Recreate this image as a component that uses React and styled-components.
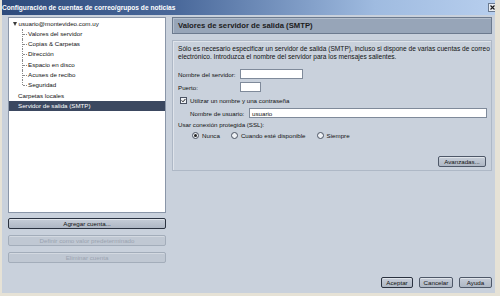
import React from "react";
import styled, { createGlobalStyle, css } from "styled-components";

const Global = createGlobalStyle`
  html, body { margin: 0; padding: 0; background: #c9d1dc; }
  body { font-family: "Liberation Sans", Arial, sans-serif; font-size: 6.2px; color: #111111; }
  * { box-sizing: border-box; }
`;

const Window = styled.div`
  width: 500px;
  height: 296px;
  display: flex;
  flex-direction: column;
  background: #c9d1dc;
  border-left: 2px solid #e6e2d6;
  border-right: 5px solid #e6e2d6;
  border-bottom: 3px solid #e6e2d6;
  overflow: hidden;
`;

const TitleBar = styled.div`
  height: 15px;
  flex: none;
  display: flex;
  align-items: center;
  justify-content: space-between;
  padding: 0 2px 0 2px;
  margin-left: -2px;
  margin-right: -5px;
  background: linear-gradient(90deg, #2e4b7c 0%, #49689a 35%, #9fbbe0 75%, #b8cfee 100%);
`;

const Title = styled.span`
  color: #ffffff;
  font-weight: bold;
  font-size: 6.6px;
`;

const CloseBtn = styled.span`
  width: 9px;
  height: 9px;
  border: 1px solid #6a7a90;
  background: #e8ecf2;
  display: flex;
  align-items: center;
  justify-content: center;
  margin-right: 1px;
`;

const Body = styled.div`
  flex: 1;
  display: flex;
  padding: 2px 1px 0 6px;
  gap: 6px;
`;

const LeftCol = styled.div`
  width: 158px;
  display: flex;
  flex-direction: column;
`;

const TreeBox = styled.div`
  height: 196px;
  background: #ffffff;
  border: 1px solid #8a96a8;
  padding-top: 0.5px;
`;

const Row = styled.div`
  height: 10.3px;
  line-height: 10.3px;
  white-space: nowrap;
  position: relative;
  padding-left: ${(p) => p.$indent}px;
  ${(p) =>
    p.$selected &&
    css`
      background: #3b4860;
      color: #ffffff;
    `}
`;

const Branch = styled.span`
  position: absolute;
  left: 13px;
  top: 0;
  width: 4px;
  height: ${(p) => (p.$last ? "5px" : "10.3px")};
  border-left: 1px dotted #8a8a8a;
  &::after {
    content: "";
    position: absolute;
    left: 0;
    top: 5px;
    width: 4px;
    border-top: 1px dotted #8a8a8a;
  }
`;

const Caret = styled.span`
  display: inline-block;
  width: 0;
  height: 0;
  border-left: 2.5px solid transparent;
  border-right: 2.5px solid transparent;
  border-top: 4px solid #3a3a3a;
  margin-right: 1.5px;
  vertical-align: 0px;
`;

const ButtonStack = styled.div`
  display: flex;
  flex-direction: column;
  gap: 6px;
  margin-top: 5px;
`;

const Button = styled.button`
  font-family: "Liberation Sans", Arial, sans-serif;
  font-size: 6.2px;
  height: ${(p) => p.$h || 11}px;
  width: ${(p) => (p.$w ? p.$w + "px" : "100%")};
  padding: 0;
  border-radius: 2px;
  color: ${(p) => (p.disabled ? "#9ba4b1" : "#111111")};
  border: 1px solid ${(p) => (p.disabled ? "#a3adba" : p.$strong ? "#2a3240" : "#4e5868")};
  background: ${(p) => (p.disabled ? "#c0c8d3" : "linear-gradient(#c6cdd8, #aeb7c4)")};
  box-shadow: ${(p) => (p.disabled ? "inset 0 1px 0 #d3d9e1" : "inset 0 1px 0 #dfe4ea")};
  cursor: default;
`;

const RightCol = styled.div`
  width: 320px;
  display: flex;
  flex-direction: column;
  gap: 6px;
`;

const Header = styled.div`
  height: 17px;
  display: flex;
  align-items: center;
  padding-left: 5px;
  background: #97a5b8;
  border: 1px solid #6c7a8e;
  box-shadow: inset 1px 1px 0 #b4bfcd;
  font-weight: bold;
  font-size: 7.7px;
  color: #1c1c1c;
`;

const Group = styled.div`
  height: 131px;
  border: 1px solid #aeb8c6;
  box-shadow: inset 1px 1px 0 #dfe4eb;
  background: #c9d1dc;
  padding: 4px 4px 0 5px;
  display: flex;
  flex-direction: column;
`;

const Para = styled.p`
  margin: 0;
  line-height: 8px;
  font-size: 6.6px;
  white-space: nowrap;
`;

const FieldRow = styled.div`
  display: flex;
  align-items: center;
  height: ${(p) => p.$h || 10}px;
  margin-top: ${(p) => p.$mt || 0}px;
  padding-left: ${(p) => p.$pl || 0}px;
  gap: ${(p) => p.$gap || 0}px;
`;

const Label = styled.span`
  width: ${(p) => (p.$w ? p.$w + "px" : "auto")};
  flex: none;
  white-space: nowrap;
`;

const Input = styled.div`
  height: ${(p) => p.$h || 10}px;
  width: ${(p) => (p.$w ? p.$w + "px" : "auto")};
  flex: ${(p) => (p.$w ? "none" : 1)};
  background: #ffffff;
  border: 1px solid #7f8a9a;
  display: flex;
  align-items: center;
  padding-left: 2px;
`;

const Check = styled.span`
  width: 7px;
  height: 7px;
  border: 1px solid #4a5262;
  background: #eef1f5;
  display: flex;
  align-items: center;
  justify-content: center;
  flex: none;
`;

const Radio = styled.span`
  width: 7px;
  height: 7px;
  border-radius: 50%;
  border: 1px solid #4a5262;
  background: #eef1f5;
  display: flex;
  align-items: center;
  justify-content: center;
  flex: none;
  &::after {
    content: "";
    width: 3px;
    height: 3px;
    border-radius: 50%;
    background: ${(p) => (p.$on ? "#222" : "transparent")};
  }
`;

const RadioItem = styled.span`
  display: flex;
  align-items: center;
  gap: 3px;
  margin-right: ${(p) => p.$mr || 0}px;
`;

const GroupFooter = styled.div`
  display: flex;
  justify-content: flex-end;
  margin-top: 16px;
  padding-right: 1px;
`;

const Footer = styled.div`
  display: flex;
  justify-content: flex-end;
  gap: 6px;
  padding: 0 3px 5px 0;
`;

const tree = [
  { t: "usuario@montevideo.com.uy", indent: 4, caret: true },
  { t: "Valores del servidor", indent: 19, branch: true },
  { t: "Copias & Carpetas", indent: 19, branch: true },
  { t: "Dirección", indent: 19, branch: true },
  { t: "Espacio en disco", indent: 19, branch: true },
  { t: "Acuses de recibo", indent: 19, branch: true },
  { t: "Seguridad", indent: 19, branch: true, last: true },
  { t: "Carpetas locales", indent: 9 },
  { t: "Servidor de salida (SMTP)", indent: 9, selected: true },
];

export default function App() {
  return (
    <>
      <Global />
      <Window>
        <TitleBar>
          <Title>Configuración de cuentas de correo/grupos de noticias</Title>
          <CloseBtn>
            <svg width="5" height="5" viewBox="0 0 5 5">
              <path d="M0.5 0.5 L4.5 4.5 M4.5 0.5 L0.5 4.5" stroke="#1a1a1a" strokeWidth="1.1" />
            </svg>
          </CloseBtn>
        </TitleBar>
        <Body>
          <LeftCol>
            <TreeBox>
              {tree.map((r) => (
                <Row key={r.t} $indent={r.indent} $selected={r.selected}>
                  {r.branch && <Branch $last={r.last} />}
                  {r.caret && <Caret />}
                  {r.t}
                </Row>
              ))}
            </TreeBox>
            <ButtonStack>
              <Button $strong>Agregar cuenta...</Button>
              <Button disabled>Definir como valor predeterminado</Button>
              <Button disabled>Eliminar cuenta</Button>
            </ButtonStack>
          </LeftCol>
          <RightCol>
            <Header>Valores de servidor de salida (SMTP)</Header>
            <Group>
              <Para>
                Sólo es necesario especificar un servidor de salida (SMTP), incluso si dispone de varias cuentas de correo
                <br />
                electrónico. Introduzca el nombre del servidor para los mensajes salientes.
              </Para>
              <FieldRow $mt={8}>
                <Label $w={62}>Nombre del servidor:</Label>
                <Input $w={63} />
              </FieldRow>
              <FieldRow $mt={3}>
                <Label $w={62}>Puerto:</Label>
                <Input $w={21} />
              </FieldRow>
              <FieldRow $mt={3} $pl={2} $gap={3}>
                <Check>
                  <svg width="5" height="5" viewBox="0 0 5 5">
                    <path d="M0.6 2.4 L2 3.8 L4.4 1" stroke="#222" strokeWidth="1" fill="none" />
                  </svg>
                </Check>
                <Label>Utilizar un nombre y una contraseña</Label>
              </FieldRow>
              <FieldRow $mt={3} $pl={12}>
                <Label $w={59}>Nombre de usuario:</Label>
                <Input>usuario</Input>
              </FieldRow>
              <FieldRow $mt={1}>
                <Label>Usar conexión protegida (SSL):</Label>
              </FieldRow>
              <FieldRow $mt={1} $pl={14}>
                <RadioItem $mr={11}>
                  <Radio $on />
                  Nunca
                </RadioItem>
                <RadioItem $mr={11}>
                  <Radio />
                  Cuando esté disponible
                </RadioItem>
                <RadioItem>
                  <Radio />
                  Siempre
                </RadioItem>
              </FieldRow>
              <GroupFooter>
                <Button $w={48} $h={11}>Avanzadas...</Button>
              </GroupFooter>
            </Group>
          </RightCol>
        </Body>
        <Footer>
          <Button $w={32} $h={11} $strong>Aceptar</Button>
          <Button $w={34} $h={11}>Cancelar</Button>
          <Button $w={33} $h={11}>Ayuda</Button>
        </Footer>
      </Window>
    </>
  );
}
